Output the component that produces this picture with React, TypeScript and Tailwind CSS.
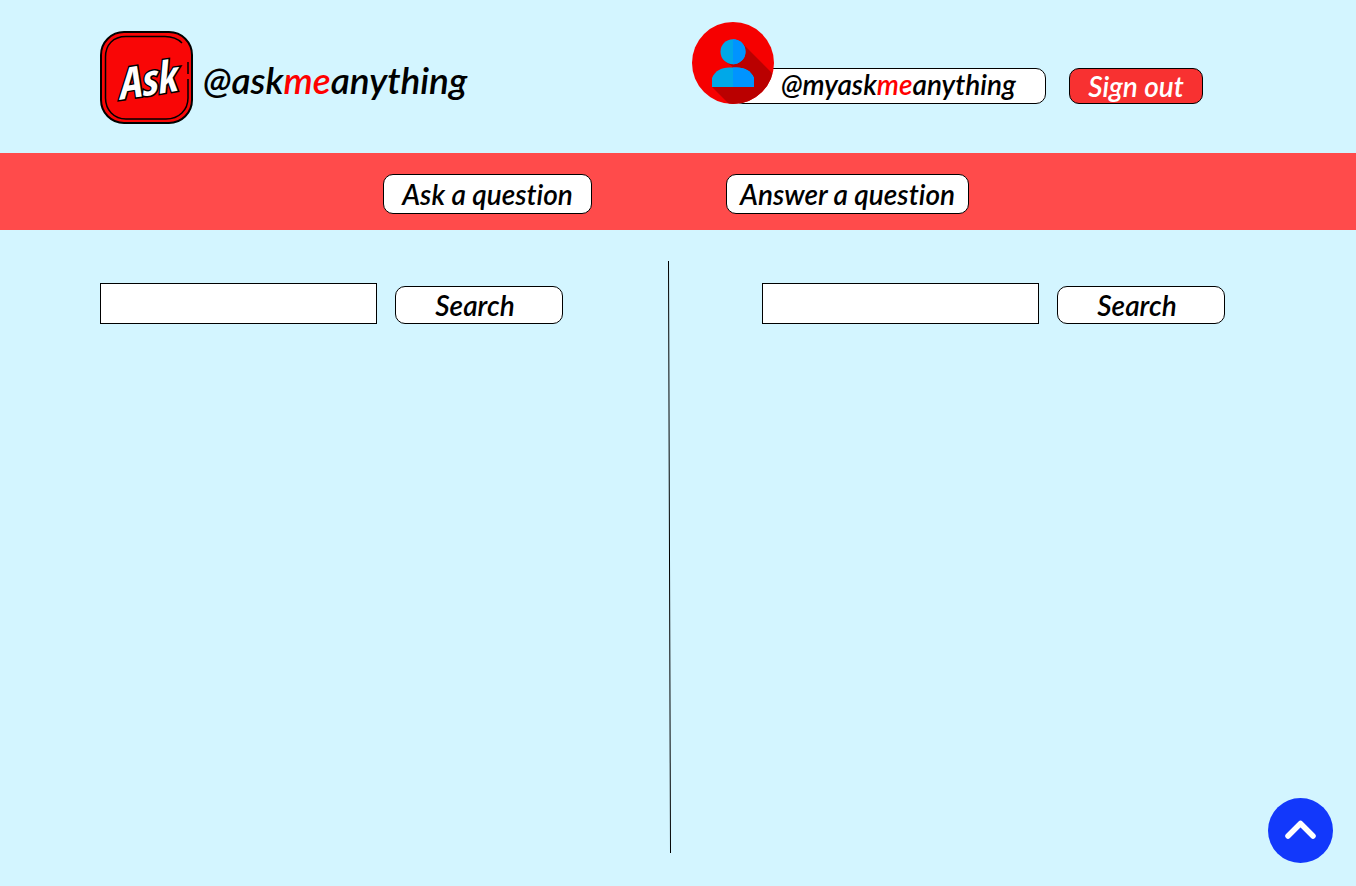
import type { ReactNode } from "react";

function Logo() {
  return (
    <svg viewBox="0 0 93 93" className="size-[93px] shrink-0" role="img" aria-label="Ask logo">
      <rect x="1" y="1" width="91" height="91" rx="23" fill="#f90606" stroke="#000" strokeWidth="2" />
      <path
        d="M82 12 C77 7 71 5.500 65 5.500 H26 C13 5.500 5.500 14 5.500 26 V67 C5.500 79 14 88 26 88 H66 C79 88 88 79 88 67 V48"
        fill="none"
        stroke="#000"
        strokeWidth="1.500"
      />
      <path d="M88 31 V43" stroke="#000" strokeWidth="1.500" />
      <text
        x="19"
        y="69"
        transform="rotate(-9 19 69)"
        fontSize="43"
        fontWeight="500"
        fontStyle="italic"
        fill="#fff"
        stroke="#000"
        strokeWidth="3"
        paintOrder="stroke"
        className="font-['Open_Sans_Condensed','DejaVu_Sans_Condensed','Liberation_Sans_Narrow',sans-serif]"
      >
        Ask
      </text>
    </svg>
  );
}

function Avatar() {
  return (
    <svg viewBox="0 0 82 82" className="relative size-[82px] shrink-0" role="img" aria-label="Profile">
      <defs>
        <clipPath id="disc">
          <circle cx="41" cy="41" r="41" />
        </clipPath>
      </defs>
      <circle cx="41" cy="41" r="41" fill="#f60000" />
      <path clipPath="url(#disc)" d="M50 21 L82 53 V82 H37 L20 65 L41 45 L34 40 Z" fill="#ba0000" />
      <circle cx="41" cy="29.700" r="12.500" fill="#00a8e8" />
      <path d="M41 17.200 A12.500 12.500 0 0 1 41 42.200 Z" fill="#0094ff" />
      <path d="M20 65 V56 C23 49 29 45.500 37 45.500 H45 C53 45.500 59 49 62 56 V65 Z" fill="#00a8e8" />
      <path d="M41 45.500 H45 C53 45.500 59 49 62 56 V65 H41 Z" fill="#0094ff" />
    </svg>
  );
}

function NavButton({ children, width }: { children: ReactNode; width: string }) {
  return (
    <button type="button" className={`h-10 rounded-[10px] border border-black bg-white text-[28px] leading-8 ${width}`}>
      {children}
    </button>
  );
}

function SearchForm({ label }: { label: string }) {
  return (
    <form className="flex items-end gap-[18px]" onSubmit={(e) => e.preventDefault()}>
      <input type="text" aria-label={label} className="h-[41px] w-[277px] border border-black bg-white px-2 text-xl" />
      <button type="submit" className="h-[38px] w-[168px] rounded-[10px] border border-black bg-white pr-2 text-[28px] leading-8">
        Search
      </button>
    </form>
  );
}

export default function App() {
  return (
    <div className="flex min-h-screen flex-col bg-[#d3f5ff] font-['Lato','Open_Sans',sans-serif] font-semibold text-black italic [font-variant-ligatures:none]">
      <header className="grid h-[153px] shrink-0 grid-cols-2 items-start">
        <a href="#" className="flex items-center gap-[10px] pt-[31px] pl-[100px] text-[37px] leading-[44px]">
          <Logo />
          <span className="pt-1">
            @ask<span className="text-[#ff0000]">me</span>anything
          </span>
        </a>
        <div className="flex items-end pt-[22px] pl-[14px]">
          <div className="z-10">
            <Avatar />
          </div>
          <div className="-ml-[41px] flex h-9 w-[313px] items-center rounded-[10px] border border-black bg-white pb-1 pl-[47px] text-[28px] leading-8">
            <span>
              @myask<span className="text-[#ff0000]">me</span>anything
            </span>
          </div>
          <button type="button" className="ml-[23px] h-9 w-[134px] rounded-[10px] border border-black bg-[#f83131] text-[28px] leading-8 text-white">
            Sign out
          </button>
        </div>
      </header>
      <nav className="flex h-[77px] shrink-0 items-start justify-center gap-[134px] bg-[#ff4b4b] pt-[21px] pr-1">
        <NavButton width="w-[209px]">Ask a question</NavButton>
        <NavButton width="w-[243px]">Answer a question</NavButton>
      </nav>
      <main className="grid flex-1 grid-cols-[1fr_3px_1fr] pt-[31px] pr-[17px] pb-[33px]">
        <section className="pt-[22px] pl-[100px]">
          <SearchForm label="Search your questions" />
        </section>
        <div className="relative">
          <svg viewBox="0 0 3 592" preserveAspectRatio="none" className="absolute inset-0 size-full" aria-hidden="true">
            <path d="M0.500 0 L2.500 592" stroke="#000" strokeWidth="1" />
          </svg>
        </div>
        <section className="pt-[22px] pl-[91px]">
          <SearchForm label="Search questions to answer" />
        </section>
      </main>
      <button type="button" aria-label="Back to top" className="fixed right-[23px] bottom-[23px] size-[65px] rounded-full bg-[#1238fb]">
        <svg viewBox="0 0 65 65" className="size-full" fill="none" stroke="#fff" strokeWidth="5.500" strokeLinecap="round" strokeLinejoin="round">
          <path d="M20 38 L32.500 25.500 L45 38" />
        </svg>
      </button>
    </div>
  );
}
